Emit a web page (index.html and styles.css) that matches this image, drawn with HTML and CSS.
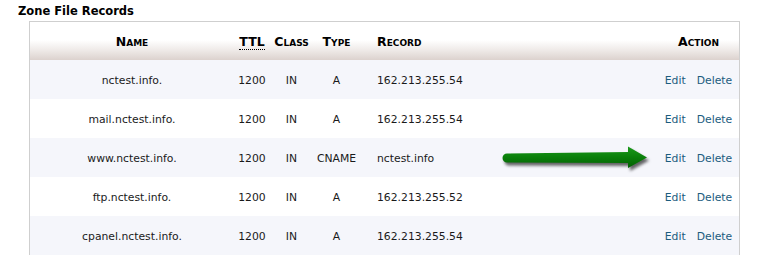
FILE: index.html
```html
<!DOCTYPE html>
<html lang="en">
<head>
<meta charset="utf-8">
<title>Zone File Records</title>
<link rel="stylesheet" href="styles.css">
</head>
<body>
<div class="page">
  <h2 class="title">Zone File Records</h2>
  <table class="records">
    <colgroup>
      <col class="c-name"><col class="c-ttl"><col class="c-class"><col class="c-type"><col class="c-record"><col class="c-action">
    </colgroup>
    <thead>
      <tr>
        <th>Name</th>
        <th><abbr title="Time To Live">TTL</abbr></th>
        <th>Class</th>
        <th>Type</th>
        <th class="left">Record</th>
        <th>Action</th>
      </tr>
    </thead>
    <tbody>
      <tr class="alt"><td>nctest.info.</td><td>1200</td><td>IN</td><td>A</td><td class="left">162.213.255.54</td><td><span class="actions"><a href="#">Edit</a><a href="#">Delete</a></span></td></tr>
      <tr><td>mail.nctest.info.</td><td>1200</td><td>IN</td><td>A</td><td class="left">162.213.255.54</td><td><span class="actions"><a href="#">Edit</a><a href="#">Delete</a></span></td></tr>
      <tr class="alt"><td>www.nctest.info.</td><td>1200</td><td>IN</td><td>CNAME</td><td class="left">nctest.info</td><td><span class="actions"><a href="#">Edit</a><a href="#">Delete</a></span></td></tr>
      <tr><td>ftp.nctest.info.</td><td>1200</td><td>IN</td><td>A</td><td class="left">162.213.255.52</td><td><span class="actions"><a href="#">Edit</a><a href="#">Delete</a></span></td></tr>
      <tr class="alt"><td>cpanel.nctest.info.</td><td>1200</td><td>IN</td><td>A</td><td class="left">162.213.255.54</td><td><span class="actions"><a href="#">Edit</a><a href="#">Delete</a></span></td></tr>
    </tbody>
  </table>
  <svg class="arrow" width="160" height="34" viewBox="0 0 160 34" aria-hidden="true">
    <defs>
      <linearGradient id="g" x1="0" y1="0" x2="0" y2="1">
        <stop offset="0" stop-color="#1c9a1c"/>
        <stop offset="0.5" stop-color="#0a7f0a"/>
        <stop offset="1" stop-color="#046004"/>
      </linearGradient>
    </defs>
    <path d="M7,9.5 L128,8 L128,2.5 L147,13.5 L128,24 L128,19 L7,18.5 A4.5,4.5 0 0 1 7,9.5 Z" fill="url(#g)"/>
  </svg>
</div>
</body>
</html>
```

FILE: styles.css
```css
html, body {
  margin: 0;
  padding: 0;
  background: #ffffff;
}

.page {
  position: relative;
  width: 760px;
  height: 255px;
  overflow: hidden;
  font-family: "DejaVu Sans", Verdana, sans-serif;
}

.title {
  margin: 0 0 0 18px;
  padding-top: 4px;
  height: 17px;
  font-size: 11.5px;
  line-height: 14px;
  font-weight: bold;
  color: #000;
}

.records {
  margin-left: 29px;
  width: 711px;
  table-layout: fixed;
  border-collapse: separate;
  border-spacing: 0;
  border: 1px solid #cfcfcf;
  border-bottom: none;
  font-size: 10.8px;
  color: #1a1a1a;
}

.c-name { width: 204px; }
.c-ttl { width: 36px; }
.c-class { width: 43px; }
.c-type { width: 47px; }
.c-record { width: 298px; }
.c-action { width: 81px; }

.records th {
  height: 38px;
  padding: 0;
  font-size: 12.5px;
  font-weight: bold;
  font-variant: small-caps;
  color: #000;
  text-align: center;
  vertical-align: middle;
  background: linear-gradient(to bottom, #ffffff 0%, #ffffff 48%, #eee9e7 75%, #dcd2ce 100%);
}

.records th abbr {
  text-decoration: none;
  border-bottom: 1px dotted #000;
}

.records td {
  height: 37px;
  padding: 2px 0 0;
  text-align: center;
  vertical-align: middle;
  white-space: nowrap;
}

.records .left {
  text-align: left;
  padding-left: 17px;
}

.records tr.alt td {
  background: #f5f6fb;
}

.actions {
  display: inline-flex;
  gap: 11px;
}

.actions a {
  color: #1b5c7e;
  text-decoration: none;
}

.arrow {
  position: absolute;
  left: 500px;
  top: 144px;
  filter: drop-shadow(2px 3px 1.5px rgba(0, 0, 0, 0.6));
}
```
